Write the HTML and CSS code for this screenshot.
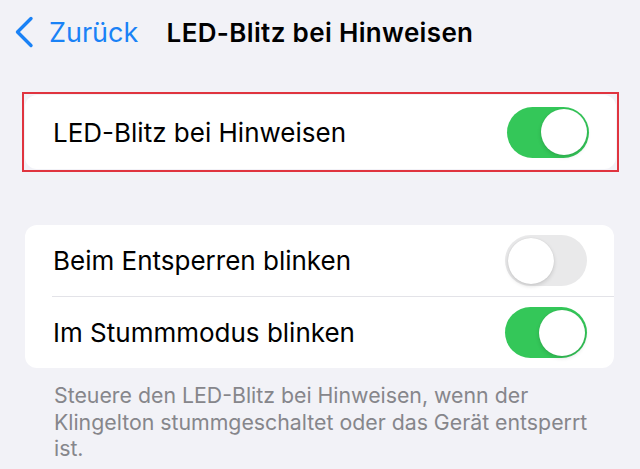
FILE: index.html
```html
<!DOCTYPE html>
<html lang="de">
<head>
<meta charset="utf-8">
<title>LED-Blitz bei Hinweisen</title>
<link rel="stylesheet" href="styles.css">
</head>
<body>
<header class="nav">
  <a class="back" href="#">
    <svg class="chev" width="20" height="32" viewBox="0 0 20 32" aria-hidden="true">
      <path d="M17 2.5 L3.5 16 L17 29.5" fill="none" stroke="#1a82f6" stroke-width="3.4" stroke-linecap="round" stroke-linejoin="round"/>
    </svg>
    <span>Zurück</span>
  </a>
  <h1 class="title">LED-Blitz bei Hinweisen</h1>
  <span></span>
</header>

<div class="highlight">
  <div class="card">
    <div class="row row-tall">
      <span class="label">LED-Blitz bei Hinweisen</span>
      <span class="toggle on"><span class="knob"></span></span>
    </div>
  </div>
</div>

<div class="card group">
  <div class="row">
    <span class="label">Beim Entsperren blinken</span>
    <span class="toggle off"><span class="knob"></span></span>
  </div>
  <div class="sep"></div>
  <div class="row">
    <span class="label">Im Stummmodus blinken</span>
    <span class="toggle on"><span class="knob"></span></span>
  </div>
</div>

<p class="footer">Steuere den LED-Blitz bei Hinweisen, wenn der Klingelton stummgeschaltet oder das Gerät entsperrt ist.</p>
</body>
</html>
```
FILE: styles.css
```css
html, body {
  margin: 0;
  padding: 0;
}
body {
  background: #f2f2f7;
  font-family: Inter, "Noto Sans", "Liberation Sans", sans-serif;
  color: #000;
  width: 640px;
  height: 469px;
  overflow: hidden;
}
.nav {
  height: 64px;
  display: grid;
  grid-template-columns: 1fr auto 1fr;
  align-items: center;
}
.back {
  display: flex;
  align-items: center;
  gap: 15px;
  padding-left: 14px;
  color: #1a82f6;
  text-decoration: none;
  font-size: 27px;
  font-weight: 400;
}
.chev {
  display: block;
}
.title {
  margin: 1px 0 0;
  font-size: 26px;
  font-weight: 600;
  letter-spacing: 0.35px;
}
.highlight {
  margin: 28px 21px 0 22px;
  border: 2px solid #e0343f;
  padding: 1px;
}
.card {
  background: #fff;
  border-radius: 12px;
}
.group {
  margin: 53px 26px 0 25px;
}
.row {
  height: 71px;
  display: flex;
  align-items: center;
  justify-content: space-between;
  padding: 0 27px 0 28px;
}
.row-tall {
  height: 74px;
}
.label {
  font-size: 26px;
}
.sep {
  height: 1px;
  background: #e3e3e8;
  margin-left: 27px;
}
.toggle {
  width: 82px;
  height: 51px;
  border-radius: 26px;
  display: flex;
  align-items: center;
  padding: 0 2.5px;
  box-sizing: border-box;
}
.toggle.on {
  background: #34c759;
  justify-content: flex-end;
}
.toggle.off {
  background: #e9e9ea;
  justify-content: flex-start;
}
.knob {
  width: 46px;
  height: 46px;
  border-radius: 50%;
  background: #fff;
  box-shadow: 0 2px 4px rgba(0, 0, 0, 0.14), 0 0 1px rgba(0, 0, 0, 0.12);
}
.footer {
  margin: 14px 40px 0 54px;
  font-size: 21.3px;
  line-height: 26.5px;
  color: #86868b;
}
```
